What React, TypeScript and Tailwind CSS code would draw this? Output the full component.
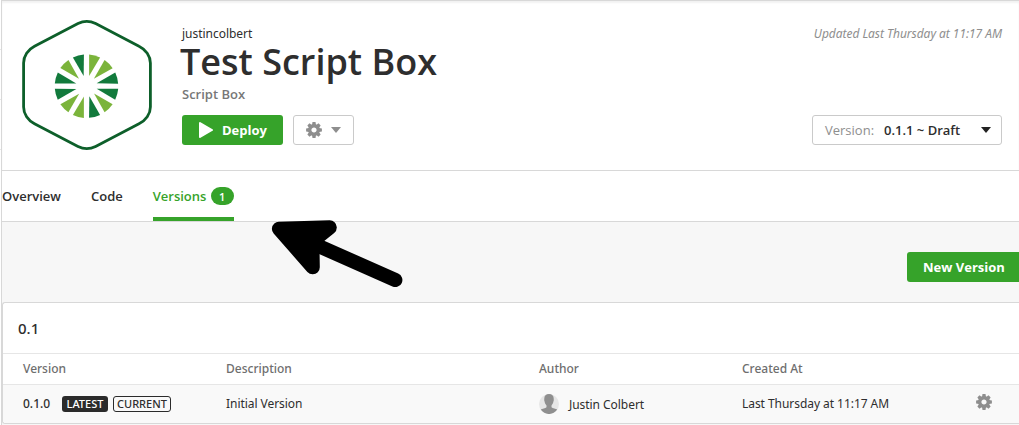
import React from "react";

const DARK = "#127a3c";
const LIME = "#7bb43b";
const WEDGES = [LIME, LIME, DARK, DARK, LIME, DARK, LIME, LIME, DARK, DARK, LIME, DARK];

function BoxLogo() {
  return (
    <svg className="h-[134px] w-[134px] shrink-0" viewBox="20 18 134 134">
      <path
        d="M23.6 63C23.6 56 28 49.5 34.5 46.2L78 23.6Q86.8 19.2 95.6 23.6L139 46.2C145.8 49.5 150.4 56 150.4 63V107C150.4 114 145.8 120.5 139 123.8L95.6 146.4Q86.8 150.8 78 146.4L34.5 123.8C28 120.5 23.6 114 23.6 107Z"
        fill="#fff"
        stroke="#0d5f2a"
        strokeWidth="2.8"
      />
      {WEDGES.map((fill, i) => (
        <path
          key={i}
          d="M2.6-10.2L2.6-31.7A32 32 0 0 1 13.6-28.7Z"
          transform={`translate(86.5 86.2) rotate(${i * 30})`}
          fill={fill}
        />
      ))}
    </svg>
  );
}

function Gear() {
  return (
    <svg className="h-4 w-4 shrink-0" viewBox="-8 -8 16 16">
      <circle r="4.25" fill="none" stroke="#8e8e8e" strokeWidth="3.3" />
      {[0, 45, 90, 135, 180, 225, 270, 315].map((a) => (
        <path key={a} d="M-2-5L-1.5-7.9H1.5L2-5Z" transform={`rotate(${a})`} fill="#8e8e8e" />
      ))}
    </svg>
  );
}

function Avatar() {
  return (
    <svg className="h-5 w-5 shrink-0" viewBox="0 0 20 20">
      <circle cx="10" cy="10" r="10" fill="#e6e6e6" />
      <path
        d="M10 0C7 0 5.2 1.8 5.3 4.6C5.3 5.6 5 6.3 5.5 7.2C5.8 9 6.6 10.4 7.5 11.4V13.2C6.5 14.4 3.2 14.7 1.7 15.6A10 10 0 0 0 18.3 15.6C16.8 14.7 13.5 14.4 12.5 13.2V11.4C13.4 10.4 14.2 9 14.5 7.2C15 6.3 14.7 5.6 14.7 4.6C14.8 1.8 13 0 10 0Z"
        fill="#8f8f8f"
      />
    </svg>
  );
}

function Caret({ className }: { className: string }) {
  return (
    <svg className={className} viewBox="0 0 10 6" preserveAspectRatio="none">
      <path d="M0 0H10L5 6Z" fill="currentColor" />
    </svg>
  );
}

function PointerArrow() {
  return (
    <svg className="absolute left-[270px] top-[218px] h-[72px] w-[136px]" viewBox="270 218 136 72">
      <path
        d="M279 228.9L329.7 227.4L312.3 241.6L312.7 267.2Z"
        stroke="#000"
        strokeWidth="14.2"
        strokeLinejoin="round"
      />
      <path d="M310 242.2L395.3 280" stroke="#000" strokeWidth="14.2" strokeLinecap="round" />
    </svg>
  );
}

const COLS = "grid grid-cols-[203px_313px_203px_234px_1fr] items-center pl-5 whitespace-nowrap";

export default function App() {
  return (
    <div className="relative flex h-[425px] w-full overflow-hidden bg-white font-['Open_Sans','Noto_Sans',sans-serif] text-[13px] text-[#2e2e2e]">
      <div className="flex w-0.5 shrink-0 flex-col border-r border-[#d8d8d8]">
        <div className="h-[50px] border-b border-[#e8e8e8]" />
        <div className="h-[50px] border-b border-[#e8e8e8]" />
        <div className="h-[50px] border-b border-[#e8e8e8]" />
      </div>

      <div className="flex min-w-0 flex-1 flex-col">
        <header className="flex h-[171px] shrink-0 items-start border-b border-t border-b-[#d8d8d8] border-t-[#d8d8d8] pl-[18px] pr-[17px] pt-[17px] shadow-[inset_0_2px_2px_#f2f2f2]">
          <BoxLogo />
          <div className="ml-7 flex flex-col whitespace-nowrap pt-[7px]">
            <div className="h-[18px] font-['Noto_Sans',sans-serif] text-[12px] leading-[18px] tracking-[-0.03px]">justincolbert</div>
            <h1 className="-ml-0.5 h-[38px] text-[36px] font-semibold leading-[38px]">Test Script Box</h1>
            <div className="mt-[3px] h-5 text-[13px] font-semibold leading-5 text-[#777]">Script Box</div>
            <div className="mt-[11px] flex gap-2.5">
              <button className="flex h-[30px] w-[101px] items-center rounded-[3px] bg-[#36a32a] pl-[17px] font-bold text-white">
                <svg className="h-4 w-3.5" viewBox="0 0 14 16">
                  <path d="M1 1L13 8L1 15Z" fill="#fff" stroke="#fff" strokeWidth="2" strokeLinejoin="round" />
                </svg>
                <span className="ml-[9px] pt-0.5">Deploy</span>
              </button>
              <button className="flex h-[30px] w-[61px] items-center rounded-[3px] border border-[#cacaca] bg-white pl-3 text-[#8e8e8e]">
                <Gear />
                <Caret className="ml-[9px] h-1.5 w-2.5" />
              </button>
            </div>
          </div>
          <div className="ml-auto flex flex-col items-end pt-[7px]">
            <div className="whitespace-nowrap font-['Noto_Sans',sans-serif] text-[12px] italic leading-[18px] tracking-[-0.04px] text-[#8e8e8e]">
              Updated Last Thursday at 11:17 AM
            </div>
            <button className="mt-[72px] flex h-[30px] w-[190px] items-center whitespace-nowrap rounded-[3px] border border-[#cacaca] bg-white pl-3 pr-2.5">
              <span className="pt-0.5 text-[#8e8e8e]">Version:</span>
              <span className="ml-2.5 pt-0.5 font-semibold">0.1.1 ~ Draft</span>
              <Caret className="ml-auto h-1.5 w-2.5 text-[#222]" />
            </button>
          </div>
        </header>

        <nav className="flex h-[51px] shrink-0 gap-[30px] border-b border-[#d8d8d8] font-semibold leading-[50px]">
          <div>Overview</div>
          <div>Code</div>
          <div className="flex h-[50px] w-[81px] items-center justify-between border-b-4 border-[#36a32a] text-[#36a32a]">
            <span className="relative top-0.5">Versions</span>
            <span className="relative top-0.5 flex h-[18px] w-[23px] items-center justify-center rounded-full bg-[#36a32a] text-[11px] leading-none text-white">
              1
            </span>
          </div>
        </nav>

        <div className="flex flex-1 flex-col bg-[#f7f7f7]">
          <div className="flex h-20 shrink-0 items-start justify-end pt-[30px]">
            <button className="h-[30px] w-28 whitespace-nowrap rounded-l-[3px] bg-[#36a32a] pl-4 pt-0.5 text-left font-bold text-white">
              New Version
            </button>
          </div>
          <section className="flex h-[122px] flex-col rounded-l-[3px] border border-r-0 border-[#d8d8d8] bg-white font-['Noto_Sans',sans-serif] text-[12px]">
            <h2 className="flex h-[51px] shrink-0 items-center border-b border-[#e6e6e6] pl-[15px] text-[15px] font-medium">
              0.1
            </h2>
            <div className={`${COLS} h-[31px] shrink-0 border-b border-[#e6e6e6] font-medium text-[#6e6e6e]`}>
              <div>Version</div>
              <div>Description</div>
              <div>Author</div>
              <div>Created At</div>
            </div>
            <div className={`${COLS} flex-1 rounded-bl-[3px] bg-[#f9f9f9] tracking-[-0.05px]`}>
              <div className="flex items-center">
                <span className="w-[39px] font-medium tracking-normal">0.1.0</span>
                <span className="flex h-4 w-[46px] items-center justify-center rounded-[3px] bg-[#2b2b2b] text-[11px] font-medium tracking-normal text-white">LATEST</span>
                <span className="ml-[5px] flex h-4 w-[58px] items-center justify-center rounded-[3px] border border-[#2b2b2b] text-[11px] font-medium tracking-normal">CURRENT</span>
              </div>
              <div>Initial Version</div>
              <div className="flex items-center">
                <Avatar />
                <span className="ml-2.5 pt-0.5">Justin Colbert</span>
              </div>
              <div>Last Thursday at 11:17 AM</div>
              <div className="pb-1"><Gear /></div>
            </div>
          </section>
        </div>
      </div>
      <PointerArrow />
    </div>
  );
}
